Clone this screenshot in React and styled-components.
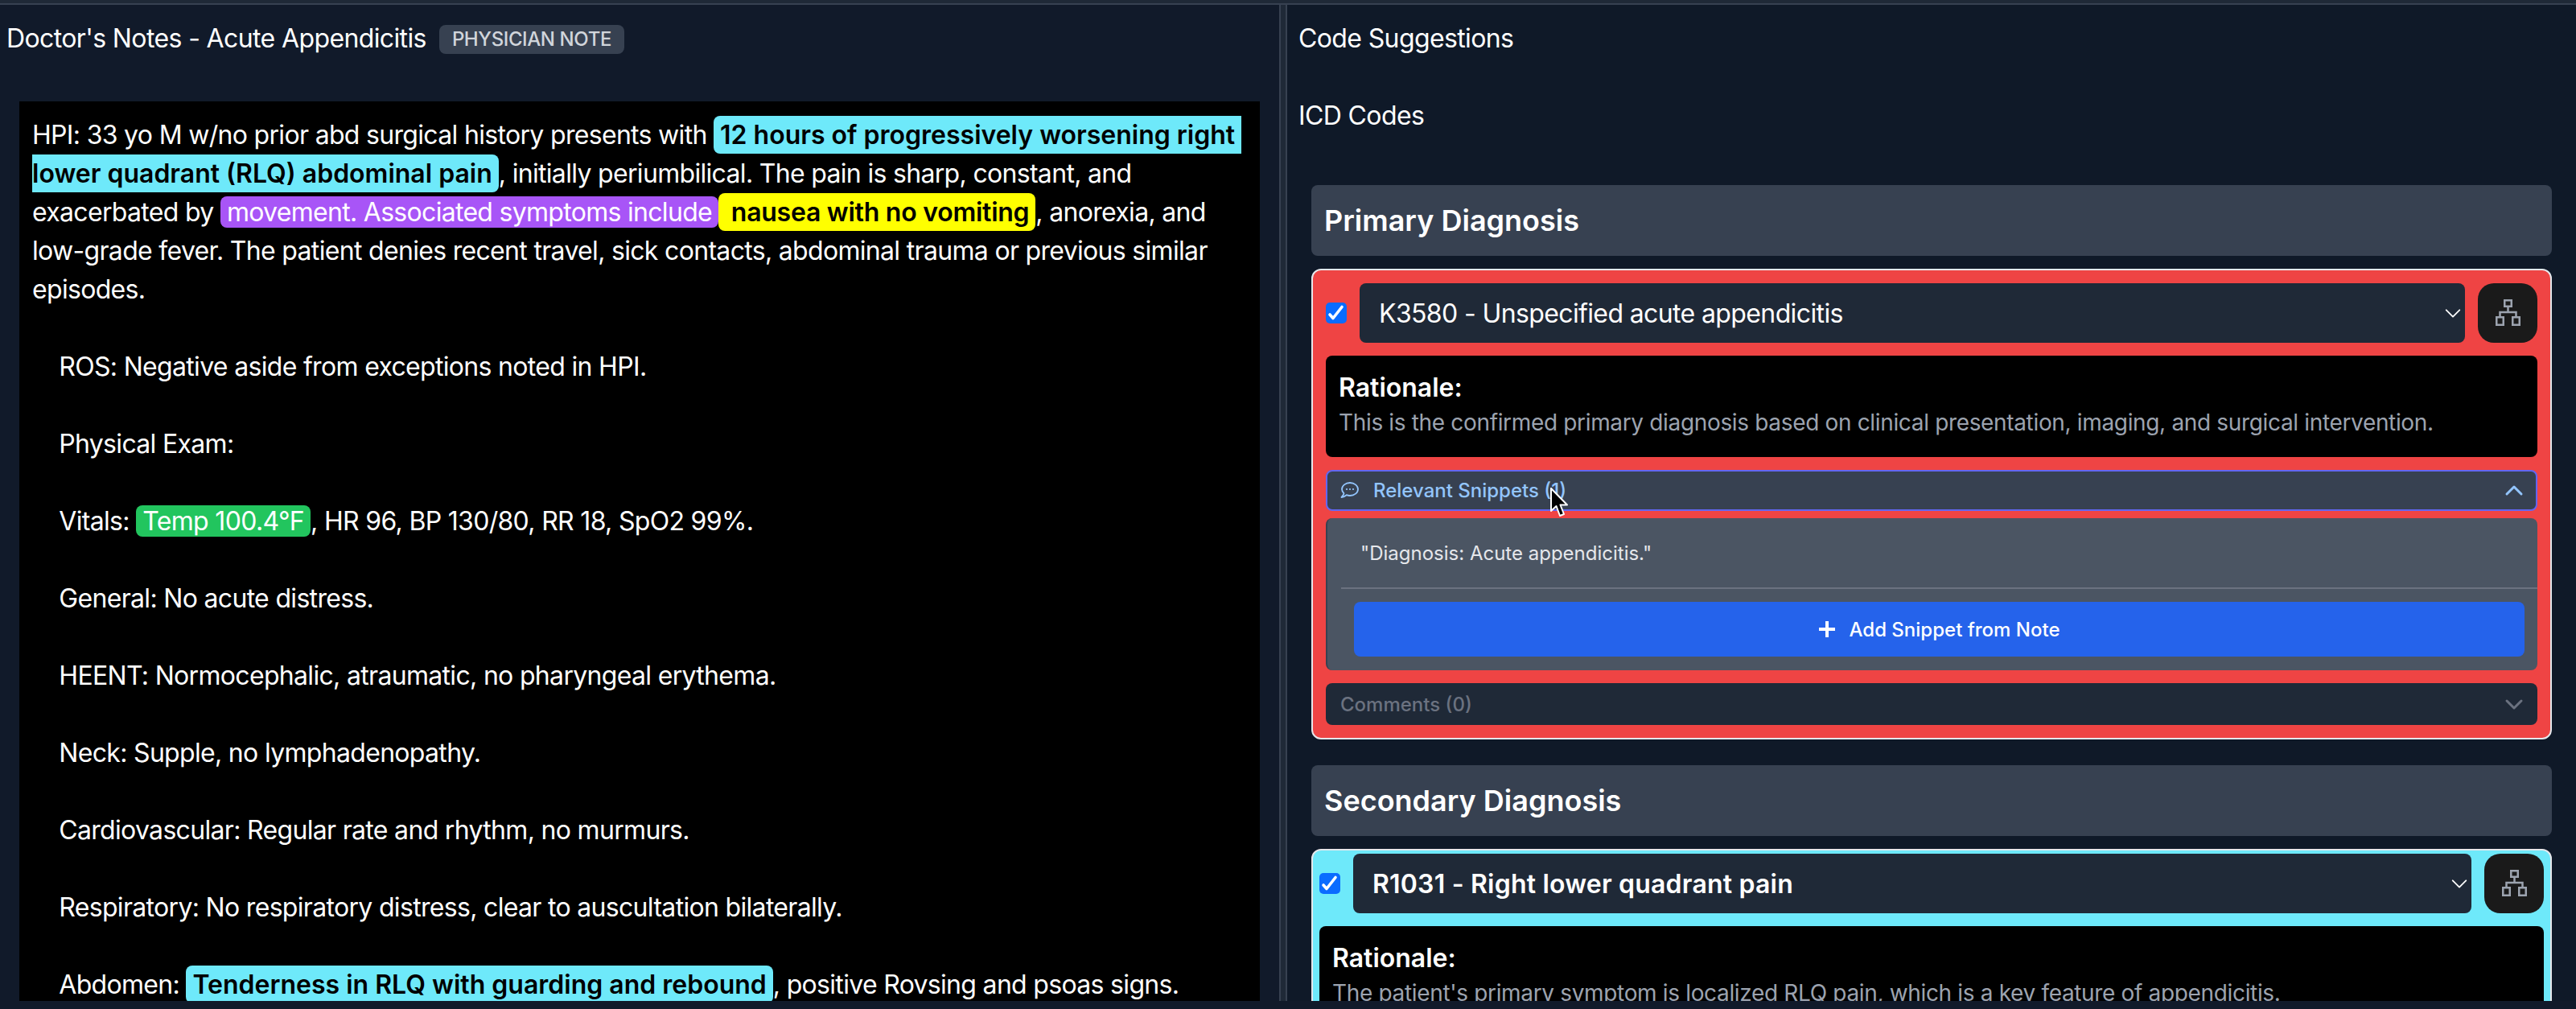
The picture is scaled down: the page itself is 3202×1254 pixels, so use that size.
import React from "react";
import styled, { createGlobalStyle } from "styled-components";

const Global = createGlobalStyle`
  html, body { margin: 0; padding: 0; background: #111a2a; }
  body { font-family: Inter, "Liberation Sans", sans-serif; color: #fff; }
  * { box-sizing: border-box; }
`;

const Page = styled.div`
  width: 3202px; height: 1254px; overflow: hidden; display: flex; flex-direction: column;
  background: #111a2a; border-top: 4px solid #1f2937;
`;
const Columns = styled.div`
  height: 1240px; flex: none; border-top: 2px solid #374151; display: grid; grid-template-columns: 1590px 10px 1fr; overflow: hidden;
`;
const LeftPanel = styled.section`
  display: flex; flex-direction: column; min-height: 0; overflow: hidden; padding-left: 8px;
`;
const Divider = styled.div`
  background: #1f2937; border-left: 2px solid #374151; border-right: 2px solid #374151;
`;
const RightPanel = styled.section`
  display: flex; flex-direction: column; min-height: 0; overflow: hidden; padding: 0 30px 0 14px; background: #0f1928;
`;
const TitleRow = styled.header`
  height: 120px; padding-top: 18px; display: flex; align-items: flex-start; gap: 16px; flex: none;
`;
const Title = styled.h2`
  margin: 0; font-size: 32px; line-height: 48px; font-weight: 400; white-space: nowrap; letter-spacing: -0.62px;
`;
const Badge = styled.span`
  margin-top: 7px; height: 36px; padding: 0 16px; border-radius: 8px; background: #374151; color: #d1d5db;
  font-size: 24px; line-height: 36px; font-weight: 500; white-space: nowrap; letter-spacing: -0.4px;
`;
const NoteBox = styled.div`
  flex: 1; min-height: 0; width: 1542px; margin-left: 16px; overflow: hidden; background: #000;
  padding: 18px 16px 0; font-size: 32px; line-height: 48px; white-space: pre-wrap; color: #fff; letter-spacing: -0.68px;
`;
const Mark = styled.mark`
  border-radius: 8px; color: ${p => p.$ink || "#000"}; background: ${p => p.$bg};
  font-weight: ${p => p.$bold ? 600 : 400}; padding: ${p => p.$bold ? "4px 8px" : "0 8px"};
  letter-spacing: ${p => p.$ls || "0"};
`;
const SubHeading = styled.h3`
  margin: 0; padding-top: 18px; height: ${p => p.$h}px; font-size: 32px; line-height: 48px; font-weight: 400; flex: none; letter-spacing: -0.62px;
`;
const Scroller = styled.div`
  flex: 1; min-height: 0; overflow: hidden; display: flex; flex-direction: column; padding-left: 16px;
`;
const SectionBar = styled.div`
  flex: none; height: 88px; padding: 0 16px; border-radius: 8px; background: #374151; display: flex; align-items: center;
  font-size: 36px; font-weight: 600; margin-bottom: 16px;
`;
const Card = styled.article`
  flex: none; border: 2px solid #e5e7eb; border-radius: 12px; background: ${p => p.$bg};
  padding: ${p => p.$tight ? "4px 8px 16px" : "16px"}; margin-bottom: 32px;
  display: flex; flex-direction: column; gap: 16px;
`;
const TopRow = styled.div`
  display: flex; align-items: center; gap: 16px;
`;
const Check = styled.span`
  width: 26px; height: 26px; border-radius: 5px; background: #0a6cff; flex: none;
  display: flex; align-items: center; justify-content: center;
`;
const SelectBox = styled.div`
  flex: 1; height: 74px; border-radius: 8px; background: #1f2937;
  display: flex; align-items: center; justify-content: space-between; padding: 0 4px 0 24px;
  font-size: 32px; font-weight: ${p => p.$bold ? 600 : 400}; letter-spacing: ${p => p.$bold ? "0.2px" : "-0.62px"};
`;
const GraphButton = styled.button`
  width: 74px; height: 74px; border: 0; border-radius: 20px; background: #1a1a1a; color: #9ca3af; padding: 0; flex: none;
  display: flex; align-items: center; justify-content: center;
`;
const Rationale = styled.div`
  background: #000; border-radius: 8px; padding: 18px 16px; height: 126px;
`;
const RationaleLabel = styled.div`
  font-size: 32px; line-height: 44px; font-weight: 600;
`;
const RationaleText = styled.div`
  margin-top: 3px; font-size: 28px; line-height: 36px; color: #9ca3af; white-space: nowrap; letter-spacing: -0.34px;
`;
const SnippetBar = styled.div`
  height: 51px; margin-bottom: -7px; border-radius: 8px; background: #374151; border: 2px solid #6366f1; padding: 0 15px 0 15px;
  display: flex; align-items: center; gap: 17px; color: #93c5fd; font-size: 24px; font-weight: 500; position: relative;
`;
const Grow = styled.span`
  flex: 1;
`;
const SnippetBody = styled.div`
  background: #4b5563; border-radius: 8px; border-left: 2px solid #374151; height: 189px; display: flex; flex-direction: column; padding-left: 17px;
`;
const SnippetQuote = styled.div`
  height: 88px; padding: 26px 24px 0 24px; border-bottom: 2px solid #6b7280; font-size: 24px; line-height: 36px; color: #e5e7eb;
`;
const AddButton = styled.div`
  margin: 16px 16px 0 16px; height: 68px; border-radius: 8px; background: #2563eb; color: #fff;
  display: flex; align-items: center; justify-content: center; gap: 16px; font-size: 24px; font-weight: 500;
`;
const CommentsBar = styled.div`
  height: 52px; border-radius: 8px; background: #1f2937; color: #6b7280; padding: 0 17px 0 18px;
  display: flex; align-items: center; font-size: 24px; font-weight: 500;
`;
const Cursor = styled.svg`
  position: absolute; left: 276px; top: 20px; width: 24px; height: 37px;
`;

const Chevron = ({ up, color, w = 24, sw = 3 }) => (
  <svg width={w} height={w} viewBox="0 0 24 24" fill="none" stroke={color} strokeWidth={sw} strokeLinecap="round" strokeLinejoin="round">
    <path d={up ? "M3 16 12 7l9 9" : "M3 8l9 9 9-9"} />
  </svg>
);
const Hierarchy = () => (
  <svg width="32" height="36" viewBox="0 0 32 36" fill="none" stroke="currentColor" strokeWidth="2.5">
    <rect x="12.25" y="2.25" width="8.5" height="7.5" />
    <path d="M16.5 11v6M6.5 23v-6h20v6" />
    <rect x="2.25" y="23.25" width="8.5" height="9.5" />
    <rect x="22.25" y="23.25" width="8.5" height="9.5" />
  </svg>
);
const Tick = () => (
  <svg width="26" height="26" viewBox="0 0 26 26" fill="none" stroke="#fff" strokeWidth="3.6" strokeLinecap="round" strokeLinejoin="round">
    <path d="M5 15l4 4.5L20 5.5" />
  </svg>
);
const Bubble = () => (
  <svg width="25" height="21" viewBox="0 0 25 21" fill="none" stroke="#93c5fd" strokeWidth="1.8" strokeLinecap="round" strokeLinejoin="round">
    <path d="M5.5 14.2C4 12.8 3 11 3 9c0-4.4 4.5-8 10-8s10 3.6 10 8-4.5 8-10 8c-1.5 0-3-.3-4.3-.8C7 17.6 4.8 18.6 2.5 19c1.4-1.4 2.5-3 3-4.8z" />
    <path d="M9 9h.01M13 9h.01M17 9h.01" strokeWidth="2.2" />
  </svg>
);
const Plus = () => (
  <svg width="22" height="22" viewBox="0 0 22 22" fill="none" stroke="#fff" strokeWidth="4">
    <path d="M11 1v20M1 11h20" />
  </svg>
);

const CodeCard = ({ bg, tight, code, bold, rationale, children }) => (
  <Card $bg={bg} $tight={tight}>
    <TopRow>
      <Check><Tick /></Check>
      <SelectBox $bold={bold}>
        <span>{code}</span>
        <Chevron color="#fff" w={22} sw={2} />
      </SelectBox>
      <GraphButton><Hierarchy /></GraphButton>
    </TopRow>
    <Rationale>
      <RationaleLabel>Rationale:</RationaleLabel>
      <RationaleText>{rationale}</RationaleText>
    </Rationale>
    {children}
  </Card>
);

export default function App() {
  const cyan = "#6ee9fa";
  return (
    <Page>
      <Global />
      <Columns>
        <LeftPanel>
          <TitleRow>
            <Title>Doctor's Notes - Acute Appendicitis</Title>
            <Badge>PHYSICIAN NOTE</Badge>
          </TitleRow>
          <NoteBox>
            {"HPI: 33 yo M w/no prior abd surgical history presents with "}
            <Mark $bg={cyan} $bold>12 hours of progressively worsening right lower quadrant (RLQ) abdominal pain</Mark>
            {", initially periumbilical. The pain is sharp, constant, and exacerbated by "}
            <Mark $bg="#a855f7" $ink="#fff" $ls="-0.7px">movement. Associated symptoms include</Mark>
            <Mark $bg="#ffff00" $bold $ls="-0.25px">{" nausea with no vomiting"}</Mark>
            {", anorexia, and low-grade fever. The patient denies recent travel, sick contacts, abdominal trauma or previous similar episodes.\n\n    ROS: Negative aside from exceptions noted in HPI.\n\n    Physical Exam:\n\n    Vitals: "}
            <Mark $bg="#22c55e" $ink="#fff" $ls="-0.65px">Temp 100.4°F</Mark>
            {", HR 96, BP 130/80, RR 18, SpO2 99%.\n\n    General: No acute distress.\n\n    HEENT: Normocephalic, atraumatic, no pharyngeal erythema.\n\n    Neck: Supple, no lymphadenopathy.\n\n    Cardiovascular: Regular rate and rhythm, no murmurs.\n\n    Respiratory: No respiratory distress, clear to auscultation bilaterally.\n\n    Abdomen: "}
            <Mark $bg={cyan} $bold>Tenderness in RLQ with guarding and rebound</Mark>
            {", positive Rovsing and psoas signs."}
          </NoteBox>
        </LeftPanel>
        <Divider />
        <RightPanel>
          <SubHeading $h={96}>Code Suggestions</SubHeading>
          <SubHeading $h={128}>ICD Codes</SubHeading>
          <Scroller>
            <SectionBar>Primary Diagnosis</SectionBar>
            <CodeCard bg="#ef4444" code="K3580 - Unspecified acute appendicitis" rationale="This is the confirmed primary diagnosis based on clinical presentation, imaging, and surgical intervention.">
              <SnippetBar>
                <Bubble />
                <span>Relevant Snippets (1)</span>
                <Grow />
                <Chevron up color="#93c5fd" />
                <Cursor viewBox="0 0 24 37">
                  <path d="M2 1v28l6.5-6 4.5 12 5-2-4.5-11.5H22z" fill="#000" stroke="#fff" strokeWidth="2" strokeLinejoin="round" />
                </Cursor>
              </SnippetBar>
              <SnippetBody>
                <SnippetQuote>"Diagnosis: Acute appendicitis."</SnippetQuote>
                <AddButton><Plus />Add Snippet from Note</AddButton>
              </SnippetBody>
              <CommentsBar>
                <span>Comments (0)</span>
                <Grow />
                <Chevron color="#6b7280" />
              </CommentsBar>
            </CodeCard>
            <SectionBar>Secondary Diagnosis</SectionBar>
            <CodeCard bg={cyan} tight bold code="R1031 - Right lower quadrant pain" rationale="The patient's primary symptom is localized RLQ pain, which is a key feature of appendicitis." />
          </Scroller>
        </RightPanel>
      </Columns>
    </Page>
  );
}
